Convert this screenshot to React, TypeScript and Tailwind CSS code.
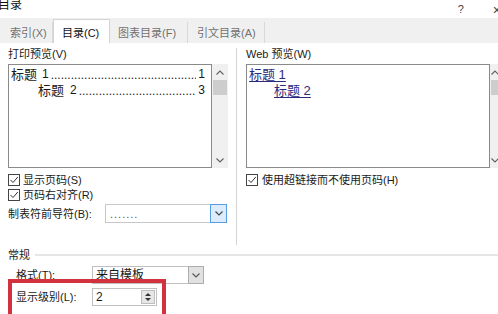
import React from "react";

const Chevron = ({ dir = "down", color = "#606060" }: { dir?: "up" | "down"; color?: string }) => (
  <svg width="8" height="5" viewBox="0 0 8 5">
    {dir === "down" ? (
      <path d="M0.5 0.5 L4 4 L7.5 0.5" fill="none" stroke={color} strokeWidth="1.1" />
    ) : (
      <path d="M0.5 4.5 L4 1 L7.5 4.5" fill="none" stroke={color} strokeWidth="1.1" />
    )}
  </svg>
);

const Check = () => (
  <div className="w-[12px] h-[12px] border border-[#444] bg-white flex items-center justify-center shrink-0">
    <svg width="10" height="10" viewBox="0 0 10 10">
      <path d="M1.5 5 L4 7.5 L8.8 2" fill="none" stroke="#333" strokeWidth="1" />
    </svg>
  </div>
);

const Dots = () => (
  <span className="flex-1 overflow-hidden whitespace-nowrap text-[12px] leading-[14px] tracking-[0px] mx-[2px]">
    {".".repeat(120)}
  </span>
);

const Tab = ({ label, w, pl, selected, sep }: { label: string; w: string; pl: string; selected?: boolean; sep?: boolean }) => (
  <div
    className={
      selected
        ? `${w} ${pl} h-[24px] bg-white border-t border-l border-r border-[#d4d4d4] flex items-center pt-[2px] text-[#111]`
        : `${w} ${pl} h-[21px] flex items-center text-[#707070] ${sep ? "border-r border-[#d9d9d9]" : ""}`
    }
  >
    <span className="text-[11px] leading-[12px] whitespace-nowrap">{label}</span>
  </div>
);

export default function App() {
  return (
    <div
      className="relative w-[498px] h-[314px] overflow-hidden bg-white text-[#1a1a1a]"
      style={{ fontFamily: '"Liberation Sans","Noto Sans CJK SC",sans-serif' }}
    >
      {/* Title bar */}
      <div className="h-[18px] flex items-start bg-white">
        <div className="-mt-[1px] -ml-[2px] text-[12px] leading-[12px] text-[#111]">目录</div>
        <div className="ml-auto mt-[4px] text-[11px] leading-[10px] text-[#444]">?</div>
        <div className="ml-[29px] -mr-[3px] mt-[4px] text-[14px] leading-[12px] text-[#444]">×</div>
      </div>

      {/* Tab strip */}
      <div className="h-[25px] bg-[#f0f0f0] flex items-end pl-[2px]">
        <Tab label="索引(X)" w="w-[51px]" pl="pl-[8px]" sep />
        <Tab label="目录(C)" w="w-[57px]" pl="pl-[8px]" selected />
        <Tab label="图表目录(F)" w="w-[78px]" pl="pl-[8px]" sep />
        <Tab label="引文目录(A)" w="w-[77px]" pl="pl-[9px]" sep />
      </div>

      {/* Content */}
      <div className="flex mt-[5px]">
        {/* Left column */}
        <div className="w-[237px] shrink-0 h-[197px] border-r border-[#d5d5d5] pl-[8px] flex flex-col">
          <div className="h-[16px] text-[11px] leading-[13px]">打印预览(V)</div>
          <div className="flex h-[104px]">
            <div className="w-[204px] h-[104px] border border-[#8a8a8a] bg-white flex flex-col pt-[1px]">
              <div className="flex items-end h-[16px] pl-[2px] pr-[6px] text-[13px] leading-[15px]">
                <span>标题</span>
                <span className="ml-[5px] text-[12px]">1</span>
                <Dots />
                <span className="text-[12px]">1</span>
              </div>
              <div className="flex items-end h-[16px] pl-[29px] pr-[6px] text-[13px] leading-[15px]">
                <span>标题</span>
                <span className="ml-[6px] text-[12px]">2</span>
                <Dots />
                <span className="text-[12px]">3</span>
              </div>
            </div>
            <div className="w-[16px] h-[104px] bg-[#f0f0f0] flex flex-col items-center">
              <div className="h-[16px] flex items-center justify-center">
                <Chevron dir="up" />
              </div>
              <div className="w-[14px] h-[15px] bg-[#cdcdcd]" />
              <div className="flex-1" />
              <div className="h-[16px] flex items-center justify-center">
                <Chevron dir="down" />
              </div>
            </div>
          </div>

          <div className="mt-[4px] h-[15px] flex items-center gap-[3px]">
            <Check />
            <span className="text-[11px] leading-[12px]">显示页码(S)</span>
          </div>
          <div className="h-[15px] flex items-center gap-[3px]">
            <Check />
            <span className="text-[11px] leading-[12px]">页码右对齐(R)</span>
          </div>
          <div className="mt-[2px] h-[19px] flex items-center">
            <span className="w-[97px] text-[11px] leading-[12px]">制表符前导符(B):</span>
            <div className="w-[122px] h-[19px] border border-[#c8c8c8] flex items-center">
              <span className="flex-1 pl-[4px] text-[11px] leading-[10px] tracking-[1px] text-[#555]">.......</span>
              <div className="w-[17px] h-[19px] -my-[1px] -mr-[1px] border border-[#569de5] bg-[#dcecfc] flex items-center justify-center">
                <Chevron dir="down" color="#444" />
              </div>
            </div>
          </div>
        </div>

        {/* Right column */}
        <div className="flex-1 min-w-0 overflow-hidden pl-[9px] flex flex-col">
          <div className="h-[16px] text-[11px] leading-[13px]">Web 预览(W)</div>
          <div className="flex h-[104px]">
            <div className="w-[244px] shrink-0 h-[104px] border border-[#8a8a8a] bg-white flex flex-col pt-[1px] pl-[2px] text-[13px] leading-[15px] text-[#2b2b7e]">
              <div className="h-[16px] flex items-end">
                <span className="underline underline-offset-2">标题 1</span>
              </div>
              <div className="h-[16px] flex items-end pl-[25px]">
                <span className="underline underline-offset-2">标题 2</span>
              </div>
            </div>
            <div className="w-[16px] shrink-0 h-[104px] bg-[#f0f0f0] flex flex-col items-start pl-[1px]">
              <div className="h-[16px] flex items-center">
                <Chevron dir="up" />
              </div>
              <div className="w-[14px] h-[15px] bg-[#cdcdcd]" />
              <div className="flex-1" />
              <div className="h-[16px] flex items-center">
                <Chevron dir="down" />
              </div>
            </div>
          </div>
          <div className="mt-[4px] h-[15px] flex items-center gap-[4px]">
            <Check />
            <span className="text-[11px] leading-[12px]">使用超链接而不使用页码(H)</span>
          </div>
        </div>
      </div>

      {/* General section */}
      <div className="mt-[3px] h-[14px] flex items-center pl-[8px]">
        <span className="text-[11px] leading-[12px]">常规</span>
        <div className="flex-1 h-[2px] bg-[#e6e6e6] ml-[5px]" />
      </div>
      <div className="mt-[3px] h-[20px] flex items-center">
        <span className="w-[92px] pl-[16px] text-[11px] leading-[12px]">格式(T):</span>
        <div className="w-[112px] h-[18px] border border-[#c0c0c0] flex items-center">
          <span className="flex-1 pl-[3px] text-[12px] leading-[14px]">来自模板</span>
          <div className="w-[16px] h-[18px] -my-[1px] -mr-[1px] border border-[#adadad] bg-[#e1e1e1] flex items-center justify-center">
            <Chevron dir="down" color="#555" />
          </div>
        </div>
      </div>
      <div className="mt-[2px] h-[20px] flex items-center">
        <span className="w-[92px] pl-[16px] text-[11px] leading-[12px]">显示级别(L):</span>
        <div className="w-[65px] h-[18px] border border-[#c0c0c0] flex items-center">
          <span className="flex-1 pl-[3px] text-[12px] leading-[14px]">2</span>
          <div className="w-[14px] h-[14px] mr-[1px] border border-[#bdbdbd] bg-[#e6e6e6] flex flex-col items-center justify-center gap-[2px]">
            <svg width="6" height="3" viewBox="0 0 6 3"><path d="M0 3 L3 0 L6 3 Z" fill="#333" /></svg>
            <svg width="6" height="3" viewBox="0 0 6 3"><path d="M0 0 L3 3 L6 0 Z" fill="#333" /></svg>
          </div>
        </div>
      </div>

      {/* Red annotation box */}
      <div className="absolute left-[8px] top-[279px] w-[158px] h-[50px] border-[4px] border-[#d2323e]" />
    </div>
  );
}
